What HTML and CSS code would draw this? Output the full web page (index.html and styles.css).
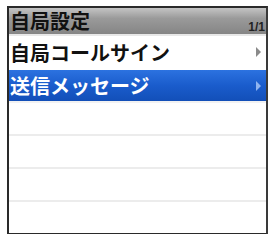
FILE: index.html
```html
<!DOCTYPE html>
<html lang="ja">
<head>
    <meta charset="UTF-8">
    <title>自局設定</title>
    <link rel="stylesheet" href="styles.css">
</head>
<body>
    <div class="screen">
        <div class="title">
            <span class="title-text">自局設定</span>
            <span class="page">1/1</span>
        </div>
        <div class="row first">
            <span>自局コールサイン</span>
            <span class="arrow"></span>
        </div>
        <div class="row selected">
            <span>送信メッセージ</span>
            <span class="arrow"></span>
        </div>
        <div class="row empty"></div>
        <div class="row empty"></div>
        <div class="row empty"></div>
        <div class="row empty last"></div>
    </div>
</body>
</html>
```

FILE: styles.css
```css
body {
    margin: 0;
    background: #fff;
    font-family: "Noto Sans CJK JP", "Noto Sans", sans-serif;
}
.screen {
    margin: 6px 2px 0 7px;
    width: 257px;
    height: 225px;
    border: 2px solid #2a2a2a;
    border-right-color: #3a3a3a;
    display: flex;
    flex-direction: column;
    overflow: hidden;
}
.title {
    height: 26px;
    display: flex;
    align-items: flex-end;
    justify-content: space-between;
    padding: 0 1px 0 1px;
    background: linear-gradient(to bottom, #c4c4c4 0%, #9a9a9a 40%, #858585 100%);
    border-bottom: 2px solid #e8e8e8;
}
.title-text {
    font-size: 20px;
    line-height: 26px;
    color: #111;
    font-weight: bold;
}
.page {
    font-size: 12px;
    font-weight: bold;
    color: #222;
    font-family: "Liberation Sans", sans-serif;
    line-height: 14px;
}
.row {
    height: 33px;
    flex: none;
    display: flex;
    align-items: center;
    justify-content: space-between;
    padding: 0 5px 0 1px;
    font-size: 20px;
    font-weight: bold;
    color: #111;
    border-bottom: 2px solid #ececec;
    box-sizing: border-box;
}
.row.first {
    height: 34px;
    border-bottom-color: #fff;
}
.row.selected {
    background: linear-gradient(to bottom, #2c72e0 0%, #1a5ccc 50%, #124fb8 100%);
    color: #fff;
    border-bottom-color: #f2f2f2;
}
.row.last {
    border-bottom: none;
}
.arrow {
    width: 0;
    height: 0;
    border-top: 5px solid transparent;
    border-bottom: 5px solid transparent;
    border-left: 5px solid #8a8a8a;
}
.selected .arrow {
    border-left-color: #8fb4f0;
}
```
